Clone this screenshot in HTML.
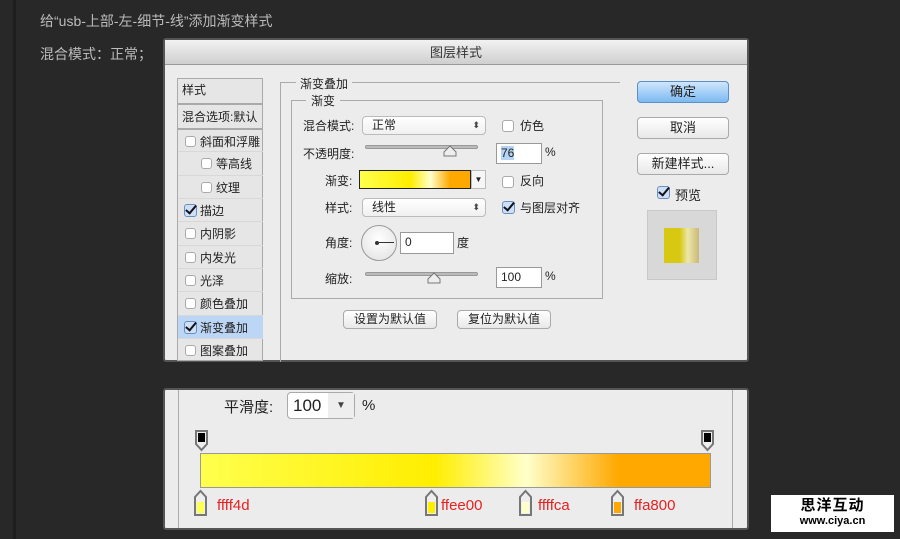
<!DOCTYPE html>
<html><head><meta charset="utf-8"><style>
*{margin:0;padding:0;box-sizing:border-box}
body{width:900px;height:539px;background:#282828;position:relative;overflow:hidden;font-family:"Liberation Sans","Noto Sans CJK SC",sans-serif;font-size:12px;color:#222}
.a{position:absolute}
.t{color:#bbb;font-size:14px}
.dlg{position:absolute;background:#ececec;border:2px solid #555;border-radius:3px}
.cb{position:absolute;width:11px;height:11px;border:1px solid #aaa;border-radius:3px;background:#fff}
.ck{position:absolute;width:13px;height:13px;border:1px solid #6a8fbf;border-radius:3px;background:#cfe0f5}
.ck::after{content:"";position:absolute;left:3px;top:-2px;width:4px;height:9px;border:solid #112;border-width:0 2.5px 2.5px 0;transform:rotate(40deg)}
.row{position:absolute;left:0;width:85px;height:23px;border-top:1px solid #d8d8d8;font-size:12px}
.sel{position:absolute;height:19px;border:1px solid #bbb;border-radius:4px;background:linear-gradient(#fff,#f0f0f0);padding-left:9px;line-height:17px}
.sel::after{content:"⬍";position:absolute;right:5px;top:0;font-size:9px;color:#444}
.inp{position:absolute;background:#fff;border:1px solid #999;line-height:18px;padding-left:4px;font-size:12px}
.btn{position:absolute;border:1px solid #aaa;border-radius:4px;background:linear-gradient(#fff,#e8e8e8);text-align:center;font-size:13px}
.sl{position:absolute;height:4px;border-radius:2px;background:#bbb;border:1px solid #999}
.g{background:linear-gradient(90deg,#ffff4d 0%,#ffee00 46%,#ffffca 64%,#ffa800 82%,#ffa800 100%)}
.lab{position:absolute;color:#e82020;font-size:15px;top:497px}
</style></head><body>
<div class="a" style="left:13px;top:0;width:3px;height:539px;background:#1e1e1e"></div>
<div class="a t" style="left:40px;top:11px">给“usb-上部-左-细节-线”添加渐变样式</div>
<div class="a t" style="left:40px;top:44px">混合模式：正常；</div>

<div class="dlg" style="left:163px;top:38px;width:586px;height:324px">
<div class="a" style="left:0;top:0;width:582px;height:25px;background:linear-gradient(#f2f2f2,#cfcfcf);border-bottom:1px solid #999;text-align:center;line-height:25px;font-size:13px;color:#333">图层样式</div>
</div>
<div class="a" style="left:177px;top:78px;width:86px;height:283px;background:#e6e6e6;border:1px solid #aaa">
<div class="row" style="top:0;padding:2px 4px;border-top:none">样式</div>
<div class="row" style="top:24px;padding:3px 4px;height:25px;border-top:2px solid #aaa">混合选项:默认</div>
<div class="row" style="top:49px;padding:3px 0 0 22px;border-top:2px solid #aaa">斜面和浮雕<span class="cb" style="left:7px;top:6px"></span></div>
<div class="row" style="top:72px;padding:3px 0 0 38px">等高线<span class="cb" style="left:23px;top:6px"></span></div>
<div class="row" style="top:96px;padding:3px 0 0 38px">纹理<span class="cb" style="left:23px;top:6px"></span></div>
<div class="row" style="top:119px;padding:3px 0 0 22px">描边<span class="ck" style="left:6px;top:5px"></span></div>
<div class="row" style="top:142px;padding:3px 0 0 22px">内阴影<span class="cb" style="left:7px;top:6px"></span></div>
<div class="row" style="top:166px;padding:3px 0 0 22px">内发光<span class="cb" style="left:7px;top:6px"></span></div>
<div class="row" style="top:189px;padding:3px 0 0 22px">光泽<span class="cb" style="left:7px;top:6px"></span></div>
<div class="row" style="top:212px;padding:3px 0 0 22px">颜色叠加<span class="cb" style="left:7px;top:6px"></span></div>
<div class="row" style="top:236px;padding:3px 0 0 22px;background:#bcd6f5">渐变叠加<span class="ck" style="left:6px;top:5px"></span></div>
<div class="row" style="top:259px;padding:3px 0 0 22px">图案叠加<span class="cb" style="left:7px;top:6px"></span></div>
</div>

<div class="a" style="left:280px;top:82px;width:340px;height:280px;border-left:1px solid #aaa;border-top:1px solid #aaa"></div>
<div class="a" style="left:296px;top:75px;background:#ececec;padding:0 4px">渐变叠加</div>
<div class="a" style="left:291px;top:100px;width:312px;height:199px;border:1px solid #aaa"></div>
<div class="a" style="left:306px;top:92px;background:#ececec;padding:0 5px">渐变</div>

<div class="a" style="left:303px;top:117px">混合模式:</div>
<div class="sel" style="left:362px;top:116px;width:124px">正常</div>
<span class="cb" style="left:502px;top:120px;width:12px;height:12px"></span><div class="a" style="left:520px;top:117px">仿色</div>

<div class="a" style="left:303px;top:145px">不透明度:</div>
<div class="sl" style="left:365px;top:145px;width:113px"></div>
<svg class="a" style="left:443px;top:145px" width="14" height="12"><path d="M1 11 L1 7 L7 1 L13 7 L13 11 Z" fill="#eee" stroke="#777"/></svg>
<div class="inp" style="left:496px;top:143px;width:46px;height:21px"><span style="background:#b5d3f3">76</span></div>
<div class="a" style="left:545px;top:145px">%</div>

<div class="a" style="left:325px;top:172px">渐变:</div>
<div class="a g" style="left:359px;top:170px;width:112px;height:19px;border:1px solid #222"></div>
<div class="a" style="left:471px;top:170px;width:15px;height:19px;border:1px solid #bbb;background:#f6f6f6;font-size:8px;text-align:center;line-height:17px">▼</div>
<span class="cb" style="left:502px;top:176px;width:12px;height:12px"></span><div class="a" style="left:520px;top:172px">反向</div>

<div class="a" style="left:325px;top:199px">样式:</div>
<div class="sel" style="left:362px;top:198px;width:124px">线性</div>
<span class="ck" style="left:502px;top:201px"></span><div class="a" style="left:520px;top:199px">与图层对齐</div>

<div class="a" style="left:325px;top:234px">角度:</div>
<div class="a" style="left:361px;top:225px;width:36px;height:36px;border-radius:50%;border:1px solid #999;background:radial-gradient(circle at 50% 40%,#fff,#e0e0e0)"></div>
<div class="a" style="left:377px;top:242px;width:17px;height:1px;background:#333"></div>
<div class="a" style="left:375px;top:241px;width:4px;height:4px;border-radius:50%;background:#333"></div>
<div class="inp" style="left:400px;top:232px;width:54px;height:22px">0</div>
<div class="a" style="left:457px;top:234px">度</div>

<div class="a" style="left:325px;top:270px">缩放:</div>
<div class="sl" style="left:365px;top:272px;width:113px"></div>
<svg class="a" style="left:427px;top:272px" width="14" height="12"><path d="M1 11 L1 7 L7 1 L13 7 L13 11 Z" fill="#eee" stroke="#777"/></svg>
<div class="inp" style="left:496px;top:267px;width:46px;height:21px">100</div>
<div class="a" style="left:545px;top:269px">%</div>

<div class="btn" style="left:343px;top:310px;width:94px;height:19px;font-size:12px;line-height:17px">设置为默认值</div>
<div class="btn" style="left:457px;top:310px;width:94px;height:19px;font-size:12px;line-height:17px">复位为默认值</div>

<div class="btn" style="left:637px;top:81px;width:92px;height:22px;line-height:20px;background:linear-gradient(#cfe6fd,#7db9f2);border-color:#5a8fc8">确定</div>
<div class="btn" style="left:637px;top:117px;width:92px;height:22px;line-height:20px">取消</div>
<div class="btn" style="left:637px;top:153px;width:92px;height:22px;line-height:20px">新建样式...</div>
<span class="ck" style="left:657px;top:186px"></span><div class="a" style="left:675px;top:185px;font-size:13px">预览</div>
<div class="a" style="left:647px;top:210px;width:70px;height:70px;background:#d8d8d8;border:1px solid #c8c8c8"></div>
<div class="a" style="left:664px;top:228px;width:35px;height:35px;background:linear-gradient(90deg,#d8c812 0%,#d8c812 45%,#ece7a8 68%,#cbb87a 100%)"></div>

<div class="dlg" style="left:163px;top:388px;width:586px;height:142px"></div>
<div class="a" style="left:178px;top:390px;width:1px;height:138px;background:#aaa"></div>
<div class="a" style="left:732px;top:390px;width:1px;height:138px;background:#aaa"></div>
<div class="a" style="left:224px;top:396px;font-size:15px">平滑度:</div>
<div class="a" style="left:287px;top:392px;width:68px;height:27px;border:1px solid #aaa;border-radius:4px;background:#fff;font-size:17px;line-height:25px;padding-left:5px">100<span style="position:absolute;right:0;top:0;width:26px;height:25px;background:#eee;font-size:10px;text-align:center;color:#444">▼</span></div>
<div class="a" style="left:362px;top:397px;font-size:15px">%</div>

<svg class="a" style="left:194px;top:430px" width="16" height="22"><path d="M2 1 H13 V14 L7.5 20 L2 14 Z" fill="#eee" stroke="#777" stroke-width="2"/><rect x="4" y="3" width="7" height="9" fill="#000"/></svg>
<svg class="a" style="left:700px;top:430px" width="16" height="22"><path d="M2 1 H13 V14 L7.5 20 L2 14 Z" fill="#eee" stroke="#777" stroke-width="2"/><rect x="4" y="3" width="7" height="9" fill="#000"/></svg>
<div class="a g" style="left:200px;top:453px;width:511px;height:35px;border:1px solid #999"></div>

<svg class="a" style="left:193px;top:489px" width="16" height="28"><path d="M2 26 V8 L7.5 2 L13 8 V26 Z" fill="#eee" stroke="#777" stroke-width="2"/><rect x="4" y="13" width="7" height="11" fill="#ffff4d"/></svg>
<svg class="a" style="left:424px;top:489px" width="16" height="28"><path d="M2 26 V8 L7.5 2 L13 8 V26 Z" fill="#eee" stroke="#777" stroke-width="2"/><rect x="4" y="13" width="7" height="11" fill="#ffee00"/></svg>
<svg class="a" style="left:518px;top:489px" width="16" height="28"><path d="M2 26 V8 L7.5 2 L13 8 V26 Z" fill="#eee" stroke="#777" stroke-width="2"/><rect x="4" y="13" width="7" height="11" fill="#ffffca"/></svg>
<svg class="a" style="left:610px;top:489px" width="16" height="28"><path d="M2 26 V8 L7.5 2 L13 8 V26 Z" fill="#eee" stroke="#777" stroke-width="2"/><rect x="4" y="13" width="7" height="11" fill="#ffa800"/></svg>
<div class="lab" style="left:217px">ffff4d</div>
<div class="lab" style="left:441px">ffee00</div>
<div class="lab" style="left:538px">ffffca</div>
<div class="lab" style="left:634px">ffa800</div>

<div class="a" style="left:771px;top:495px;width:123px;height:37px;background:#fff;text-align:center;color:#000">
<div style="font-size:15px;font-weight:bold;line-height:18px;margin-top:2px;letter-spacing:1px">思洋互动</div>
<div style="font-size:11px;font-weight:bold;line-height:12px">www.ciya.cn</div></div>
</body></html>
